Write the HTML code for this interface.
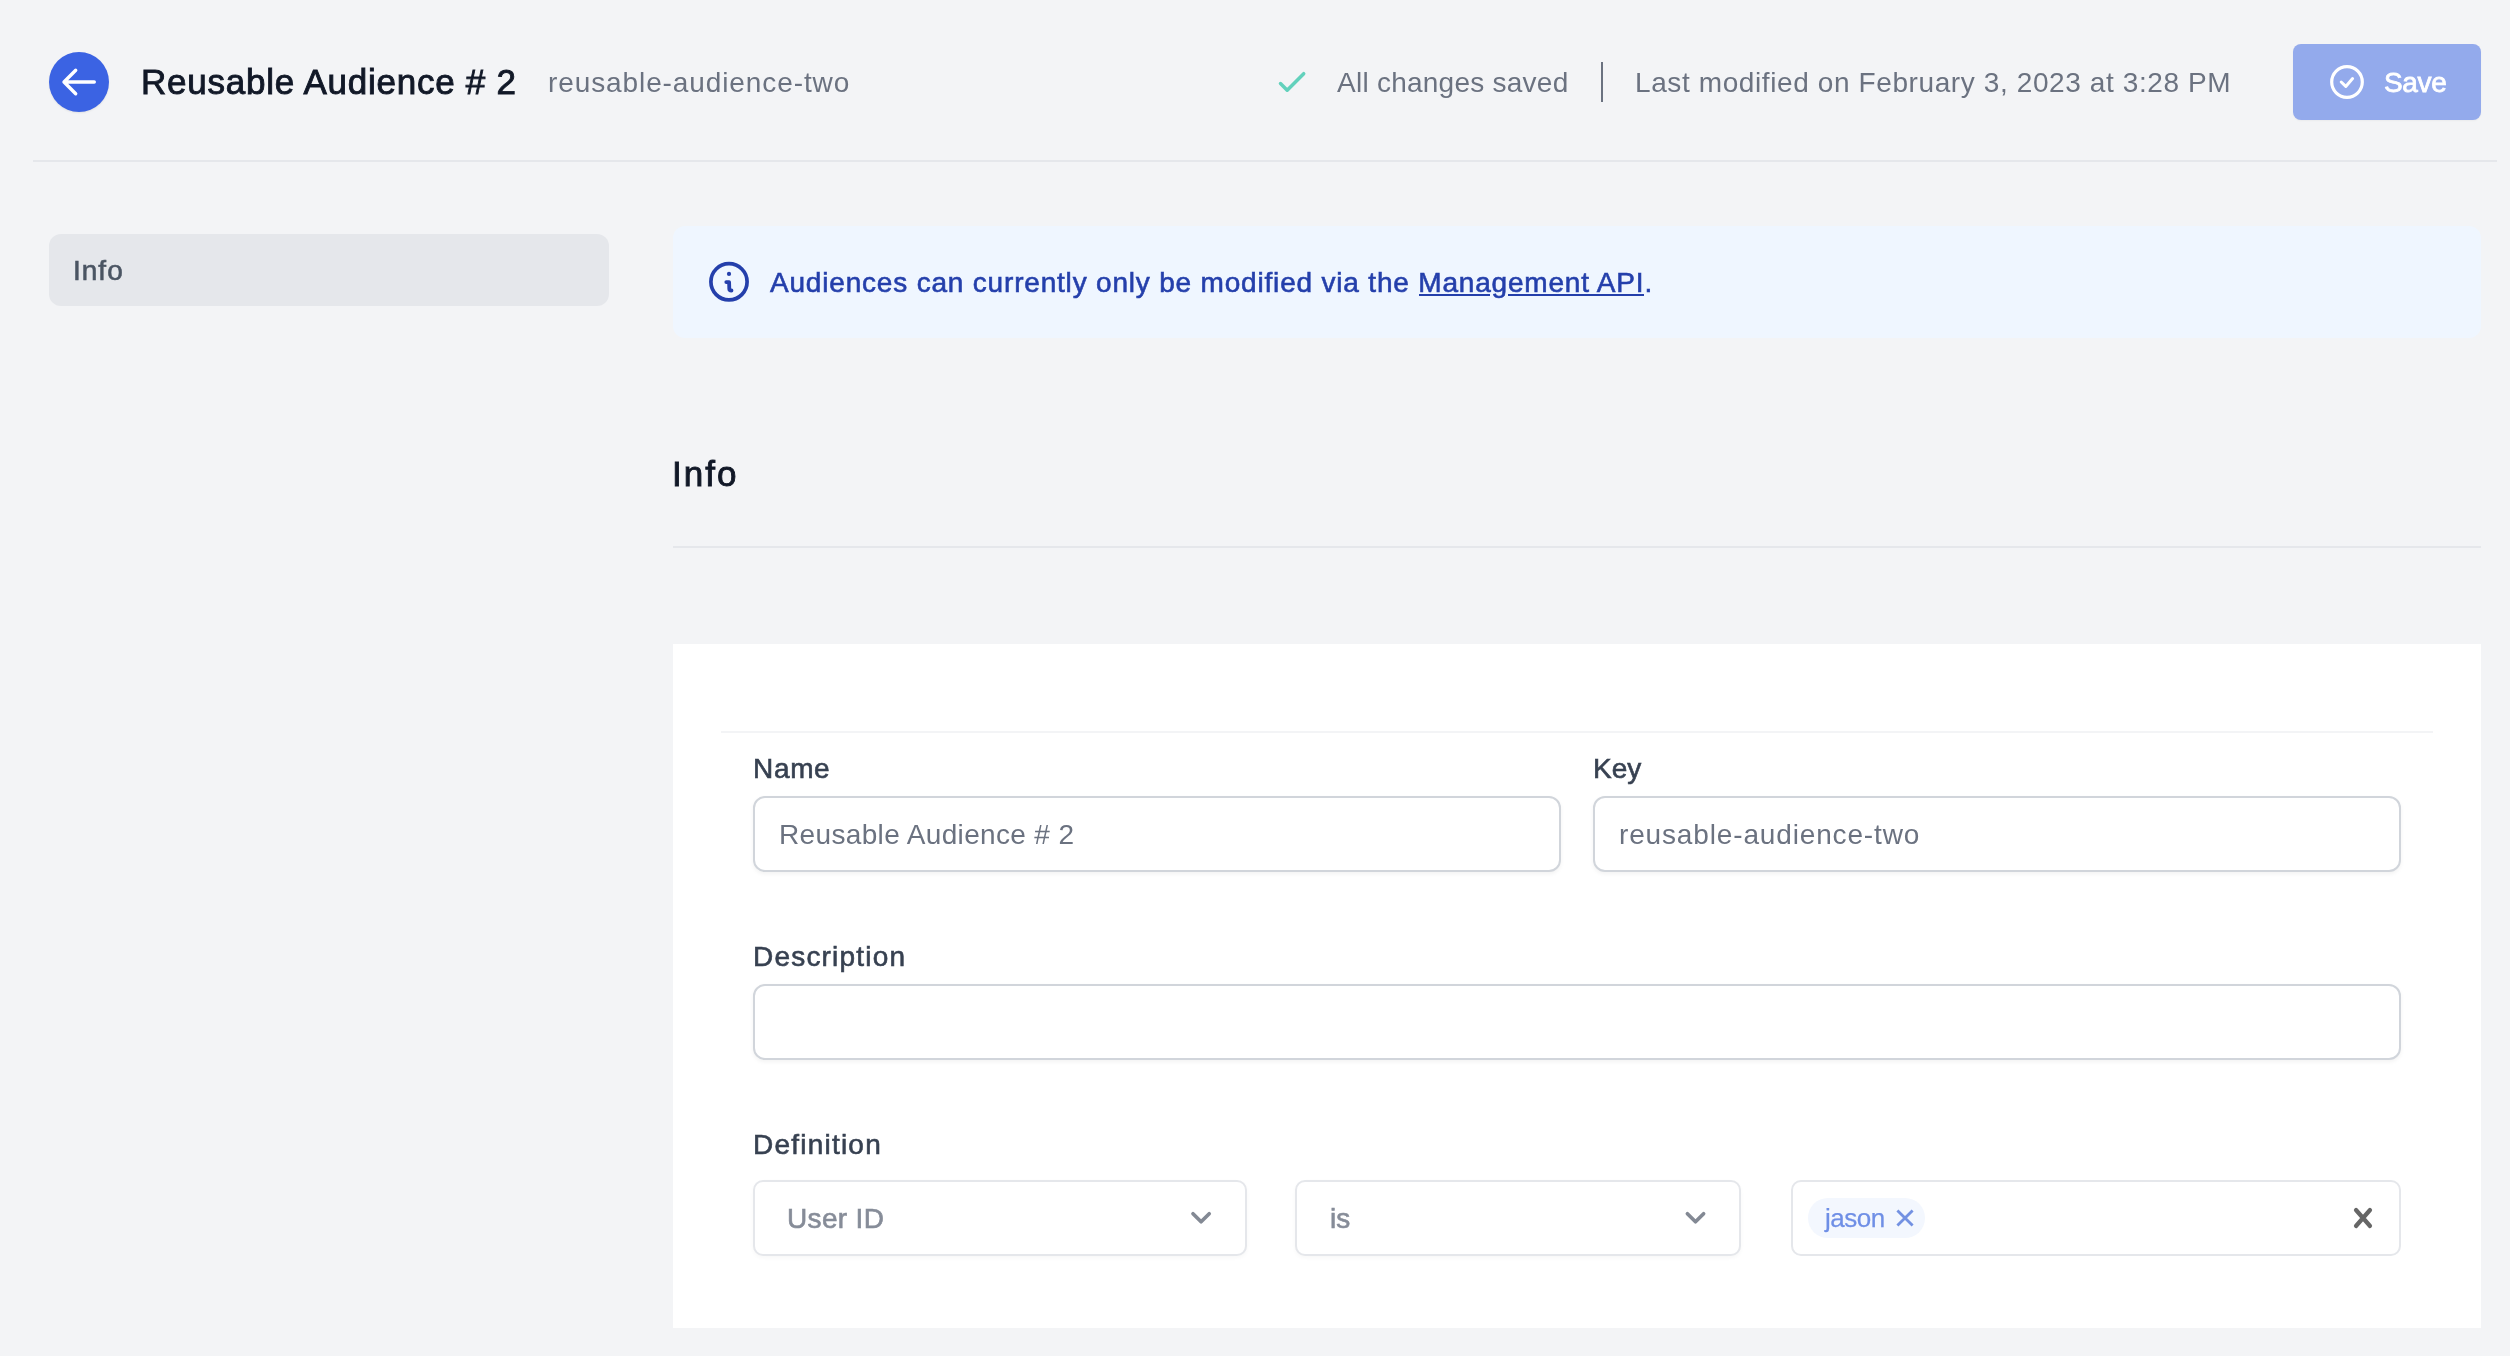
<!DOCTYPE html>
<html><head><meta charset="utf-8"><title>Reusable Audience # 2</title><style>
*{margin:0;padding:0;box-sizing:border-box}
html,body{width:2510px;height:1356px;overflow:hidden}
body{background:#F3F4F6;font-family:"Liberation Sans",sans-serif;position:relative}
.t{position:absolute;white-space:nowrap;will-change:transform}
.b{position:absolute}
u{text-decoration:none}
</style></head>
<body>

<div class="b" style="left:49px;top:52px;width:60px;height:60px;border-radius:50%;background:#3B63E3;box-shadow:0 1px 2px rgba(0,0,0,0.08)"></div>
<div class="b" style="left:2293px;top:44px;width:188px;height:76px;border-radius:8px;background:#93AAEC;box-shadow:0 1px 2px rgba(0,0,0,0.04)"></div>
<div class="b" style="left:1601px;top:62px;width:2px;height:40px;background:#6B7280"></div>
<div class="b" style="left:33px;top:160px;width:2464px;height:2px;background:#E5E7EB"></div>
<div class="b" style="left:49px;top:234px;width:560px;height:72px;border-radius:12px;background:#E5E7EB"></div>
<div class="b" style="left:673px;top:226px;width:1808px;height:112px;border-radius:12px;background:#EFF6FF"></div>
<div class="b" style="left:1419px;top:294px;width:71px;height:2px;background:#243FAB"></div>
<div class="b" style="left:1508px;top:294px;width:136px;height:2px;background:#243FAB"></div>
<div class="b" style="left:673px;top:546px;width:1808px;height:2px;background:#E5E7EB"></div>
<div class="b" style="left:673px;top:644px;width:1808px;height:684px;background:#FFFFFF"></div>
<div class="b" style="left:721px;top:731px;width:1712px;height:2px;background:#F3F4F6"></div>
<div class="b" style="left:753px;top:796px;width:808px;height:76px;border:2px solid #D1D5DB;border-radius:12px;background:#fff;box-shadow:0 2px 4px rgba(0,0,0,0.05)"></div>
<div class="b" style="left:1593px;top:796px;width:808px;height:76px;border:2px solid #D1D5DB;border-radius:12px;background:#fff;box-shadow:0 2px 4px rgba(0,0,0,0.05)"></div>
<div class="b" style="left:753px;top:984px;width:1648px;height:76px;border:2px solid #D1D5DB;border-radius:12px;background:#fff;box-shadow:0 2px 4px rgba(0,0,0,0.05)"></div>
<div class="b" style="left:753px;top:1180px;width:494px;height:76px;border:2px solid #E5E7EB;border-radius:10px;background:#fff;box-shadow:0 2px 4px rgba(0,0,0,0.03)"></div>
<div class="b" style="left:1295px;top:1180px;width:446px;height:76px;border:2px solid #E5E7EB;border-radius:10px;background:#fff;box-shadow:0 2px 4px rgba(0,0,0,0.03)"></div>
<div class="b" style="left:1791px;top:1180px;width:610px;height:76px;border:2px solid #E5E7EB;border-radius:10px;background:#fff"></div>
<div class="b" style="left:1808px;top:1198px;width:117px;height:40px;border-radius:20px;background:#F3F7FE"></div>

<div class="t" id="title" style="left:141.00px;top:64.37px;font-size:35px;line-height:35px;letter-spacing:0.750px;color:#111827;font-weight:400;-webkit-text-stroke:0.9px #111827;">Reusable Audience # 2</div>
<div class="t" id="sub" style="left:548.00px;top:69.30px;font-size:28px;line-height:28px;letter-spacing:0.900px;color:#6B7280;font-weight:400;">reusable-audience-two</div>
<div class="t" id="saved" style="left:1337.00px;top:69.30px;font-size:28px;line-height:28px;letter-spacing:0.250px;color:#6B7280;font-weight:400;">All changes saved</div>
<div class="t" id="lastmod" style="left:1635.00px;top:69.30px;font-size:28px;line-height:28px;letter-spacing:0.605px;color:#6B7280;font-weight:400;">Last modified on February 3, 2023 at 3:28 PM</div>
<div class="t" id="save" style="left:2384.00px;top:69.30px;font-size:28px;line-height:28px;letter-spacing:-0.333px;color:#FFFFFF;font-weight:400;-webkit-text-stroke:0.8px #FFFFFF;">Save</div>
<div class="t" id="side" style="left:73.00px;top:257.30px;font-size:28px;line-height:28px;letter-spacing:1.000px;color:#4B5563;font-weight:400;-webkit-text-stroke:0.6px #4B5563;">Info</div>
<div class="t" id="banner" style="left:770.00px;top:269.30px;font-size:28px;line-height:28px;letter-spacing:0.810px;color:#243FAB;font-weight:400;-webkit-text-stroke:0.6px #243FAB;">Audiences can currently only be modified via the <u>Management API</u>.</div>
<div class="t" id="h2" style="left:672.00px;top:456.37px;font-size:35px;line-height:35px;letter-spacing:2.000px;color:#111827;font-weight:400;-webkit-text-stroke:0.9px #111827;">Info</div>
<div class="t" id="lname" style="left:753.00px;top:755.30px;font-size:28px;line-height:28px;letter-spacing:0.667px;color:#374151;font-weight:400;-webkit-text-stroke:0.6px #374151;">Name</div>
<div class="t" id="lkey" style="left:1593.00px;top:755.30px;font-size:28px;line-height:28px;letter-spacing:0.000px;color:#374151;font-weight:400;-webkit-text-stroke:0.6px #374151;">Key</div>
<div class="t" id="vname" style="left:779.00px;top:821.30px;font-size:28px;line-height:28px;letter-spacing:0.350px;color:#6B7280;font-weight:400;">Reusable Audience # 2</div>
<div class="t" id="vkey" style="left:1619.00px;top:821.30px;font-size:28px;line-height:28px;letter-spacing:0.850px;color:#6B7280;font-weight:400;">reusable-audience-two</div>
<div class="t" id="ldesc" style="left:753.00px;top:943.30px;font-size:28px;line-height:28px;letter-spacing:1.200px;color:#374151;font-weight:400;-webkit-text-stroke:0.6px #374151;">Description</div>
<div class="t" id="ldef" style="left:753.00px;top:1131.30px;font-size:28px;line-height:28px;letter-spacing:1.222px;color:#374151;font-weight:400;-webkit-text-stroke:0.6px #374151;">Definition</div>
<div class="t" id="userid" style="left:787.00px;top:1205.30px;font-size:28px;line-height:28px;letter-spacing:0.333px;color:#868C98;font-weight:400;-webkit-text-stroke:0.6px #868C98;">User ID</div>
<div class="t" id="is" style="left:1330.00px;top:1205.30px;font-size:28px;line-height:28px;letter-spacing:0.000px;color:#868C98;font-weight:400;-webkit-text-stroke:0.6px #868C98;">is</div>
<div class="t" id="jason" style="left:1825.00px;top:1204.99px;font-size:26px;line-height:26px;letter-spacing:-0.500px;color:#6F8FE6;font-weight:400;-webkit-text-stroke:0.25px #6F8FE6;">jason</div>

<svg class="b" style="left:0;top:0" width="2510" height="1356" viewBox="0 0 2510 1356" fill="none" stroke-linecap="round" stroke-linejoin="round">
 <path d="M75.7 70.3L64 82L75.7 93.7M64 82H94.3" stroke="#fff" stroke-width="3.4"/>
 <path d="M1280.5 83.5L1287.2 90.2L1303.7 73.7" stroke="#62D1BC" stroke-width="3.5"/>
 <circle cx="2347" cy="82" r="15.3" stroke="#fff" stroke-width="3.2"/>
 <path d="M2341.2 82L2345.8 86.4L2352.6 78.6" stroke="#fff" stroke-width="3"/>
 <circle cx="729" cy="281.8" r="18.1" stroke="#243FAB" stroke-width="3.7"/>
 <circle cx="729" cy="273.9" r="2.1" fill="#243FAB"/>
 <path d="M726.3 282.1H729.1L729.3 289C729.3 290.1 730.1 290.5 731.5 290.5" stroke="#243FAB" stroke-width="3.8"/>
 <path d="M1193 1213.7L1201.1 1221.7L1209.2 1213.7" stroke="#838994" stroke-width="3.7"/>
 <path d="M1687.4 1213.7L1695.5 1221.7L1703.6 1213.7" stroke="#838994" stroke-width="3.7"/>
 <path d="M1897.4 1210.4L1912.6 1225.6M1912.6 1210.4L1897.4 1225.6" stroke="#7391E2" stroke-width="2.8" stroke-linecap="butt"/>
 <path d="M2356 1210L2370 1226M2370 1210L2356 1226" stroke="#666" stroke-width="4.2"/>
</svg>

</body></html>
